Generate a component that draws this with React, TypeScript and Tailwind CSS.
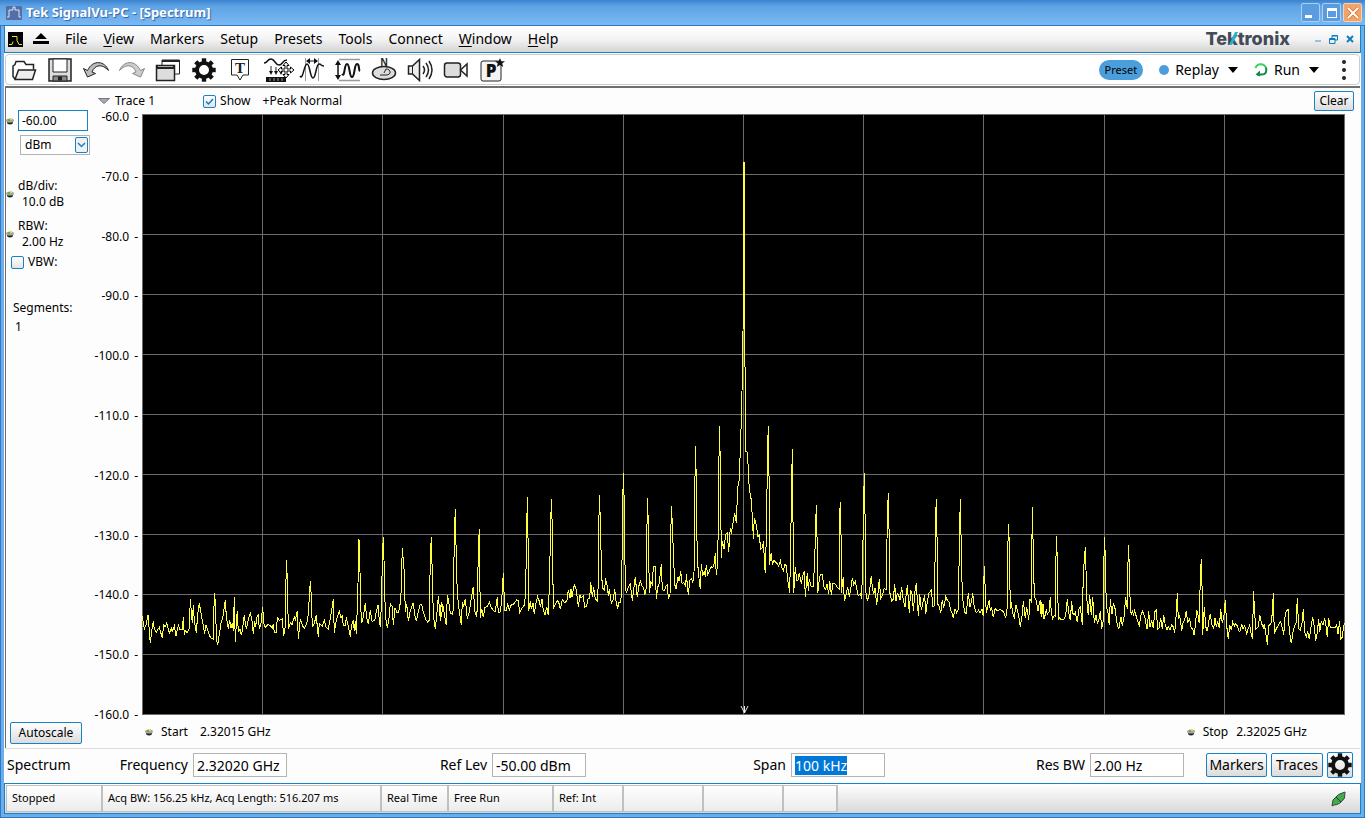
import { useEffect, useRef } from 'react';
import type { ReactNode } from 'react';
import clsx from 'clsx';

const menus = ['File', 'View', 'Markers', 'Setup', 'Presets', 'Tools', 'Connect', 'Window', 'Help'];
const underlined = ['View', 'Window', 'Help'];

const levels = ['-60.0', '-70.0', '-80.0', '-90.0', '-100.0', '-110.0', '-120.0', '-130.0', '-140.0', '-150.0', '-160.0'];

// Trace samples, kept in blocks. Each block has its own origin on the
// 1202 x 600 graticule and stores its points in thirds of a unit.
const blocks = [
  {
    x: -2,
    y: 366,
    points:
      '7,408 13,448 19,432 24,404 31,490 35,452 40,424 43,448 49,456 58,442 67,475 71,434 76,440 80,430 88,460 94,445 97,454 103,438 108,468 115,436 120,450 127,448 130,412 133,466 136,452 142,458 148,444 151,358 157,430 160,374 163,420 169,458 173,404 178,370 183,400 190,436 194,462 197,434 203,450 208,466 214,475 220,478 223,340 227,374 229,480 233,494 240,450 244,424 248,415 256,360 259,408 265,446 269,420 273,444 277,428 280,452 283,352 286,485 289,430 292,392 295,455 300,446 304,466 308,444 313,404 317,438 320,444 325,418 331,400 336,422 340,462 344,424 347,440 351,412 355,402 358,448 363,430 368,380 371,430 376,442 384,434 390,436 397,444 400,432 403,456 409,458 412,412 418,422 427,416 431,468 436,440 439,240 442,296 445,448 451,428 456,434 463,412 466,420 472,392 475,478 481,416 487,436 493,446 500,430 505,404 508,350 511,304 514,350 517,440 523,430 529,406 532,440 535,470 538,430 547,438 553,420 557,440 565,448 570,420 577,380 580,358 583,460 589,420 598,394 603,414 607,408 610,438 616,436 619,412 625,440 631,470 634,440 640,420 643,452 646,422 649,462 653,350 657,178 661,306 664,430 668,420 676,370 680,414 685,432 691,390 696,424 704,422 709,395 714,374 718,420 721,442 725,350 727,232 730,172 733,270 736,405 742,445 747,414 751,372 757,380 760,436 765,384 770,396 776,396 779,374 782,372 787,205 793,276 796,396 800,372 805,424 811,392 820,368 824,404 829,424 833,402 840,374 845,374 850,396 858,420 863,426 868,420 871,232 874,172 877,286 880,404 886,448 891,396 895,348 900,408 904,366 909,380',
  },
  {
    x: 298,
    y: 286,
    points:
      '1,662 4,606 10,622 19,676 22,584 26,606 31,640 37,642 40,630 43,404 46,328 49,478 52,582 57,626 64,676 67,606 71,618 76,598 82,656 88,636 93,600 100,560 104,634 109,646 112,630 115,446 118,386 121,654 125,626 130,652 135,622 142,620 148,606 153,620 160,632 166,634 172,590 175,638 181,636 185,600 190,520 194,632 199,632 203,610 208,630 213,616 221,612 230,600 235,602 239,638 246,624 254,614 257,560 262,290 265,462 266,632 271,604 274,628 279,608 283,642 288,610 293,590 298,604 301,620 306,598 310,630 315,644 320,620 325,646 328,560 331,430 334,298 337,382 340,624 347,612 352,602 356,606 361,628 367,598 375,610 381,600 385,570 390,594 393,566 396,590 403,554 409,570 415,620 420,586 424,594 430,588 434,622 440,618 445,594 449,596 452,546 457,590 461,562 466,596 472,604 475,550 476,408 478,286 481,356 484,488 487,564 493,570 497,540 500,546 505,588 508,566 511,588 514,610 520,598 524,566 528,602 533,626 537,606 541,608 545,580 547,390 550,220 553,310 556,570 560,576 565,560 571,552 577,602 581,570 586,532 592,592 596,560 601,542 606,558 611,562 614,586 619,564 622,294 625,368 628,580 632,546 637,554 640,500 646,500 649,598 653,562 658,550 664,492 667,568 673,572 678,558 682,554 685,594 690,586 692,430 694,318 697,370 700,452 704,554 709,568 713,530 718,544 722,512 726,550 732,548 737,558 739,522 745,586 749,540 755,536 758,550 762,520 764,330 766,138 769,236 772,498 775,504 778,548 781,568 784,492 788,528 793,512 796,530 799,494 803,524 808,514 813,500 818,504 823,490 826,460 829,526 833,490 836,270 838,78 841,182 844,474 847,424 852,446 857,404 862,398 866,456 871,384 874,402 880,364 884,338 889,370 893,262 898,238 901,150 905,28 909,-200 912,-714 915,-100 917,154',
  },
  {
    x: 598,
    y: 286,
    points:
      '19,155 22,157 25,208 28,268 34,300 38,370 40,416 43,354 49,374 54,410 58,406 62,448 67,444 71,424 73,490 76,518 80,368 82,176 85,78 88,290 88,496 94,458 97,494 102,480 107,488 112,490 116,498 121,482 126,504 130,512 134,494 139,496 143,540 149,578 152,430 155,240 157,148 159,366 161,580 166,502 170,542 174,540 178,518 184,552 188,528 193,514 196,590 202,518 205,572 208,536 213,558 220,560 224,480 227,372 229,316 232,450 233,580 237,546 241,522 247,524 253,566 257,568 261,552 266,582 269,542 274,584 279,550 286,552 292,562 298,568 298,374 301,306 304,444 304,578 310,532 313,604 318,586 323,560 328,592 333,560 337,534 341,554 346,544 350,566 355,588 361,582 365,596 368,472 371,304 373,220 376,390 378,580 382,600 386,594 390,560 394,528 397,562 401,582 405,564 410,616 414,580 418,538 422,596 427,586 432,566 439,568 442,354 445,280 448,428 449,576 455,604 460,598 464,552 468,602 472,580 476,586 480,600 485,562 490,600 495,620 498,588 502,556 508,638 512,570 517,584 520,634 525,574 529,550 535,648 539,582 544,630 550,602 554,586 557,642 562,606 567,580 574,570 579,622 584,614 586,376 589,298 592,458 593,612 597,618 602,640 607,600 611,624 617,590 622,600 627,606 632,630 636,638 640,654 645,626 650,638 655,628 659,376 661,298 664,446 667,588 670,610 674,636 678,642 682,612 685,578 690,620 694,606 698,580 703,622 709,638 716,630 720,640 726,628 730,648 731,560 733,498 736,576 739,640 744,614 748,600 751,634 755,624 760,652 765,626 772,632 780,628 787,632 793,640 797,654 802,620 803,480 805,372 808,428 811,628 814,606 818,640 823,652 828,616 832,630 836,648 841,680 847,642 850,604 856,654 860,620 866,660 870,598 874,604 877,322 880,454 883,590 888,600 894,632 899,602 904,652 907,612 912,658',
  },
  {
    x: 898,
    y: 386,
    points:
      '2,300 4,352 7,326 10,312 13,358 19,328 22,342 27,336 31,290 34,340 38,356 43,346 46,348 47,232 49,108 52,176 55,360 59,352 64,360 74,356 79,330 82,298 86,336 91,360 95,304 98,340 102,344 106,338 112,366 116,330 121,318 127,374 130,218 136,142 139,240 142,330 145,344 149,284 154,346 158,290 163,370 168,344 172,370 176,362 181,334 185,386 190,360 191,228 193,110 196,168 199,322 203,330 208,376 211,298 216,342 220,310 226,328 230,366 236,388 243,352 247,378 252,350 257,292 262,328 263,240 265,136 268,192 271,330 274,344 278,330 280,348 284,332 290,354 298,376 303,346 308,332 314,350 321,388 326,334 330,382 335,360 340,384 344,336 349,330 353,388 357,384 362,354 367,386 371,346 376,376 381,390 385,380 390,390 395,374 400,380 404,400 409,340 412,280 415,358 419,346 425,392 429,368 434,360 439,332 443,366 449,356 454,386 458,384 462,404 466,380 470,330 474,346 478,370 481,228 484,178 487,292 488,404 493,322 497,380 502,394 506,366 511,342 516,376 521,386 525,354 529,380 533,366 538,384 542,328 547,370 552,346 556,300 560,378 565,416 569,376 574,390 578,366 583,378 587,370 592,378 597,394 601,392 605,372 609,388 614,378 620,402 624,388 629,376 634,406 638,418 640,274 643,316 647,388 655,380 659,344 664,368 670,384 673,372 678,404 682,434 686,378 693,370 697,340 700,280 703,402 709,386 715,376 722,364 727,384 731,404 736,340 744,326 748,392 754,430 759,396 764,376 768,370 772,294 776,386 781,390 786,370 790,328 794,396 799,410 803,396 808,416 813,380 818,352 822,374 827,422 832,398 836,356 839,396 844,362 849,376 854,354 859,384 862,412 866,354 871,384 878,382 885,384 890,374 894,402 899,364 902,418 907,412 910,384 913,370',
  },
];

const trace = blocks
  .flatMap((block) =>
    block.points.split(' ').map((point) => {
      const [x, y] = point.split(',').map(Number);
      return `${(block.x + x / 3).toFixed(1)},${(block.y + y / 3).toFixed(1)}`;
    })
  )
  .join(' ');

function Glyph({ children }: { children: ReactNode }) {
  return (
    <svg viewBox="0 0 24 24" className="h-6 w-6 shrink-0 overflow-visible" fill="none" stroke="#222" strokeWidth={1.5}>
      {children}
    </svg>
  );
}

function GearIcon() {
  return (
    <Glyph>
      <circle cx="12" cy="12" r="7" stroke="#111" strokeWidth="4" />
      {[0, 45, 90, 135, 180, 225, 270, 315].map((angle) => (
        <rect key={angle} x="9.8" y="0.3" width="4.4" height="5" fill="#111" stroke="none" transform={`rotate(${angle} 12 12)`} />
      ))}
    </Glyph>
  );
}

const tools = [
  {
    name: 'Open',
    icon: (
      <Glyph>
        <path d="M3 21 1 18.5V8l2-1.5 1-3h8l2 3h7.5v5" />
        <path d="M3 21.5 6.5 12h17L20.5 21.5Z" fill="#eee" />
      </Glyph>
    ),
  },
  {
    name: 'Save',
    icon: (
      <Glyph>
        <path d="M1 1h22v22H1Z" fill="#ddd" />
        <path d="M5 1h14v13H5Z" fill="#fff" strokeWidth="1" />
        <path d="M5 18h14v5H5Z" fill="#888" strokeWidth="1" />
        <path d="M10 18.5h4v4h-4Z" fill="#222" stroke="none" />
      </Glyph>
    ),
  },
  {
    name: 'Undo',
    icon: (
      <Glyph>
        <path d="M-.5 10.500 3.500 19 11.500 15.500 8 14C11 6.500 18 5.500 24.500 12.500 21 3 9 1 3.500 12.500Z" fill="#bbb" strokeWidth="1" strokeLinejoin="round" />
      </Glyph>
    ),
  },
  {
    name: 'Redo',
    icon: (
      <Glyph>
        <path d="M24.500 10.500 20.500 19 12.500 15.500 16 14C13 6.500 6 5.500-.5 12.500 3 3 15 1 20.500 12.500Z" fill="#ccc" stroke="#888" strokeWidth="1" strokeLinejoin="round" />
      </Glyph>
    ),
  },
  {
    name: 'Windows',
    icon: (
      <Glyph>
        <path d="M6 7V2h17.500v14H19" fill="#fff" strokeWidth="1" />
        <path d="M6 3h17.500" strokeWidth="2" />
        <path d="M.5 7.500h18v15H.5Z" fill="#ddd" />
        <path d="M.5 9.500h18" strokeWidth="3" />
        <path d="M2 8.500h15" stroke="#aaa" strokeWidth="1" />
      </Glyph>
    ),
  },
  { name: 'Settings', icon: <GearIcon /> },
  {
    name: 'Trigger',
    icon: (
      <Glyph>
        <path d="M3.500 1.500h17V17H15l-3 5-3-5H3.500Z" strokeWidth="1" fill="#fff" />
        <text x="12" y="15" textAnchor="middle" fill="#222" stroke="none" className="font-['Liberation_Serif'] text-[15px] font-bold">
          T
        </text>
      </Glyph>
    ),
  },
  {
    name: 'Acquire',
    icon: (
      <Glyph>
        <path d="M0 5C4 5 3 1 7 1s4 6 8 6 3-5 8-5" stroke="#111" />
        <path d="M7 8v7m5-6v6m5-6v6" strokeWidth="1" />
        <path d="m5 13 2 4 2-4Zm5 0 2 4 2-4Zm5 0 2 4 2-4Z" fill="#111" stroke="none" />
        <path d="M2 19h20v5H2Z" fill="#111" stroke="none" />
        <path d="M6 20v3m4-3v3m4-3v3m4-3v3" stroke="#999" strokeWidth="1" />
      </Glyph>
    ),
  },
  {
    name: 'Analysis time',
    icon: (
      <Glyph>
        <path d="M5.500 0v23M18.500 0v23" stroke="#999" strokeWidth="1" />
        <path d="M7 3h10" stroke="#111" strokeWidth="1" />
        <path d="m10 0-4 3 4 3Zm4 0 4 3-4 3Z" fill="#111" stroke="none" />
        <path d="M0 18c3 5 4-12 7-12s3 14 6 14 3-14 6-14 1 2 5 2" stroke="#111" />
      </Glyph>
    ),
  },
  {
    name: 'Amplitude',
    icon: (
      <Glyph>
        <path d="M3 1.500h21M3 22.500h21" stroke="#999" />
        <path d="M2 4v16" stroke="#111" />
        <path d="m-1 7 3-5 3 5Zm0 10 3 5 3-5Z" fill="#111" stroke="none" />
        <path d="M6 16c3 4 2-10 5-10s2 13 5 13 2-13 5-13 1 6 3 7" stroke="#111" strokeWidth="2" />
      </Glyph>
    ),
  },
  {
    name: 'Compass',
    icon: (
      <Glyph>
        <ellipse cx="12" cy="15" rx="11.500" ry="6.500" fill="#ddd" />
        <path d="m12 15 2-4c5 0 6 6 0 6h-6" strokeWidth="1" />
        <text x="12" y="8" textAnchor="middle" fill="#222" stroke="none" className="font-['Liberation_Sans'] text-[10px] font-bold">
          N
        </text>
      </Glyph>
    ),
  },
  {
    name: 'Audio',
    icon: (
      <Glyph>
        <path d="M.5 8h4l7-6.500v21L4.500 16h-4Z" fill="#eee" />
        <path d="M4.500 8v8" strokeWidth="1" />
        <path d="M15 8q3 4 0 8M18 5q5 7 0 14M21 3q6 9 0 18" />
      </Glyph>
    ),
  },
  {
    name: 'Record',
    icon: (
      <Glyph>
        <rect x="0.500" y="5" width="16" height="14" rx="2.500" fill="#ddd" />
        <path d="M16.500 12 23 6v12Z" fill="#fff" />
      </Glyph>
    ),
  },
  {
    name: 'Presets',
    icon: (
      <Glyph>
        <rect x="1" y="3" width="20" height="20" rx="2" strokeWidth="1" fill="#f4f4f4" />
        <text x="11" y="19" textAnchor="middle" fill="#111" stroke="none" className="font-['Open_Sans'] text-[17px] font-extrabold">
          P
        </text>
        <path d="m20 0 1.300 3.200 3.700.1-2.800 2.300 1 3.400-3.200-1.900L16.800 9l1-3.400L15 3.300l3.700-.1Z" fill="#111" stroke="none" />
      </Glyph>
    ),
  },
];

function Knob() {
  return (
    <svg viewBox="0 0 8 8" className="h-2 w-2 shrink-0">
      <ellipse cx="4" cy="5" rx="3" ry="2.500" fill="#223" />
      <ellipse cx="4" cy="3.500" rx="4" ry="2" fill="#a8a8a0" />
      <rect x="2" y="2" width="2" height="2" fill="#5b3" />
      <rect x="4" y="1" width="2" height="2" fill="#dd5" />
    </svg>
  );
}

const boxButton =
  'flex items-center justify-center rounded-xs border border-[#1583c4] bg-gradient-to-b from-white to-[#dcdcdc]';

const checkbox =
  'h-[13px] w-[13px] shrink-0 appearance-none rounded-xs border border-[#1583c4] bg-gradient-to-b from-white to-[#e4e4e4]';

function TitleBar() {
  return (
    <header className="flex h-[25px] shrink-0 items-center bg-gradient-to-b from-[#3b83cf] via-[#5fa3e5] via-25% to-[#79b9f3] pr-[3px] pl-[6px]">
      <svg viewBox="0 0 16 14" className="h-[14px] w-4">
        <rect width="16" height="14" rx="1" fill="#536fa8" />
        <path d="M1 11h2V4h4V1h2v3h4v7h2" stroke="#dbe7fb" fill="none" />
      </svg>
      <h1 className="flex-1 pl-1 font-['Noto_Sans'] text-[13px] font-bold text-white [text-shadow:1px_1px_1px_#2c62a6]">
        Tek SignalVu-PC - [Spectrum]
      </h1>
      <div className="flex gap-[2px]">
        <button aria-label="Minimize" className="flex h-[19px] w-[19px] items-end justify-start rounded-xs border border-[#a9d0f5] bg-[#5b9be0] pb-[3px] pl-[3px]">
          <span className="h-[3px] w-[7px] bg-white" />
        </button>
        <button aria-label="Maximize" className="flex h-[19px] w-[19px] items-center justify-center rounded-xs border border-[#a9d0f5] bg-[#5b9be0]">
          <span className="h-[10px] w-[10px] border border-t-3 border-white" />
        </button>
        <button aria-label="Close" className="flex h-[19px] w-[19px] items-center justify-center rounded-xs border border-[#fbd0b0] bg-[#f3a268]">
          <svg viewBox="0 0 12 12" className="h-3 w-3">
            <path d="m1 1 10 10M11 1 1 11" stroke="#d9702c" strokeWidth="3.500" />
            <path d="m1 1 10 10M11 1 1 11" stroke="#fff" strokeWidth="2" />
          </svg>
        </button>
      </div>
    </header>
  );
}

function MenuBar() {
  return (
    <nav className="flex h-[28px] shrink-0 items-center border border-[#1583c4] bg-gradient-to-b from-white via-[#f4f4f4] to-[#d4d4d4] pr-[5px] pl-[3px] text-sm">
      <svg viewBox="0 0 15 15" className="h-[15px] w-[15px]">
        <rect width="15" height="15" />
        <path d="M1 12.500h3l1-3M4 4.500h5v4l2 4h3" stroke="#e6e632" fill="none" />
      </svg>
      <svg viewBox="0 0 16 12" className="ml-[10px] h-3 w-4">
        <path d="m8 0 6 6H2ZM0 8h16v3H0Z" />
      </svg>
      <div className="ml-4 flex flex-1 gap-4">
        {menus.map((menu) => (
          <button key={menu}>
            {underlined.includes(menu) ? (
              <>
                <u className="underline-offset-2">{menu[0]}</u>
                {menu.slice(1)}
              </>
            ) : (
              menu
            )}
          </button>
        ))}
      </div>
      <div className="mr-[25px] font-['Inter'] text-lg font-extrabold text-[#434b57]">
        Te
        <span className="relative">
          k
          <svg viewBox="0 0 10 13" className="absolute right-0 bottom-1 h-[13px] w-[10px]">
            <path d="M1 13 7 0h3L4 13Z" fill="#26b3cf" />
          </svg>
        </span>
        tronix
      </div>
      <div className="flex items-center gap-2">
        <button aria-label="Minimize document" className="flex h-[9px] w-[6px] items-end">
          <span className="mb-[2px] h-[2px] w-full bg-[#8fc3e2]" />
        </button>
        <button aria-label="Restore document">
          <svg viewBox="0 0 9 9" className="h-[9px] w-[9px]" fill="none" stroke="#0f7cc0">
            <path d="M3 3V.5h5.500V5H6M3 1h5.500M.5 3.500h5.500v5H.5ZM.5 4.500h5.500" />
          </svg>
        </button>
        <button aria-label="Close document">
          <svg viewBox="0 0 9 9" className="h-[9px] w-[9px]">
            <path d="m1 1 6 6M7 1 1 7" stroke="#0f7cc0" strokeWidth="2" />
          </svg>
        </button>
      </div>
    </nav>
  );
}

function Toolbar() {
  return (
    <div className="mx-px mt-px flex h-[31px] shrink-0 items-center rounded border border-[#ccc] bg-white text-sm">
      <div className="flex flex-1">
        {tools.map((tool) => (
          <button key={tool.name} aria-label={tool.name} className="relative flex w-9 justify-center">
            {tool.icon}
            {tool.name === 'Acquire' && (
              <svg viewBox="0 0 16 16" className="absolute top-1 left-5 h-4 w-4 overflow-visible">
                <path
                  d="m8 0 3 3.500H9V7h3.500V5L16 8l-3.500 3V9H9v3.500h2L8 16l-3-3.500h2V9H3.500v2L0 8l3.500-3v2H7V3.500H5Z"
                  fill="#fff"
                  stroke="#000"
                />
              </svg>
            )}
          </button>
        ))}
      </div>
      <button className="h-5 rounded-full bg-[#4a9edb] px-[6px] text-[11px] leading-5">Preset</button>
      <button className="ml-4 flex items-center">
        <span className="mr-[6px] h-[10px] w-[10px] rounded-full bg-[#4a9edb]" />
        Replay
        <svg viewBox="0 0 10 6" className="ml-[9px] h-[6px] w-[10px]">
          <path d="M0 0h10L5 6Z" />
        </svg>
      </button>
      <button className="ml-4 flex items-center">
        <svg viewBox="0 0 14 14" className="mr-[6px] h-[14px] w-[14px]" fill="none" strokeWidth="2">
          <path d="M1.500 5A5.500 5.500 0 0 1 12 5" stroke="#39d060" />
          <path d="M12 4.500C13 8 12 11.500 8 11.500H3" stroke="#158a4a" />
          <path d="M6 7.500v6L1.500 11.500Z" fill="#158a4a" stroke="none" />
        </svg>
        Run
        <svg viewBox="0 0 10 6" className="ml-[9px] h-[6px] w-[10px]">
          <path d="M0 0h10L5 6Z" />
        </svg>
      </button>
      <button aria-label="More" className="mr-[13px] ml-[23px] flex flex-col gap-1">
        <span className="h-1 w-1 rounded-full bg-[#222]" />
        <span className="h-1 w-1 rounded-full bg-[#222]" />
        <span className="h-1 w-1 rounded-full bg-[#222]" />
      </button>
    </div>
  );
}

function SidePanel() {
  return (
    <aside className="flex w-[84px] shrink-0 flex-col pt-[22px] pb-1">
      <div className="flex items-center gap-1">
        <Knob />
        <input aria-label="Reference level" defaultValue="-60.00" className="h-[21px] w-[70px] border border-[#1583c4] bg-white px-[3px] outline-none" />
      </div>
      <div className="relative mt-1 ml-[14px] h-5 w-[70px]">
        <select aria-label="Unit" className="h-5 w-full appearance-none border border-[#b4b4b4] bg-white px-1 leading-[18px]">
          <option>dBm</option>
          <option>dBmV</option>
        </select>
        <svg viewBox="0 0 13 16" className="pointer-events-none absolute top-[2px] right-[2px] h-4 w-[13px]" fill="none" stroke="#1583c4">
          <rect x="0.5" y="0.5" width="12" height="15" rx="1.500" fill="#f0f0f0" />
          <path d="m3 6 3.500 3.500L10 6" strokeWidth="1.500" />
        </svg>
      </div>
      <div className="mt-[23px] flex items-center gap-1 leading-4">
        <Knob />
        <div>
          <div>dB/div:</div>
          <div className="pl-1">10.0 dB</div>
        </div>
      </div>
      <div className="mt-2 flex items-center gap-1 leading-4">
        <Knob />
        <div>
          <div>RBW:</div>
          <div className="pl-1">2.00 Hz</div>
        </div>
      </div>
      <label className="mt-1 ml-[5px] flex items-center gap-1 leading-4">
        <input type="checkbox" className={checkbox} />
        VBW:
      </label>
      <div className="mt-[30px] ml-[7px] leading-4">Segments:</div>
      <div className="mt-[3px] ml-[9px] leading-4">1</div>
      <button className={clsx(boxButton, 'mt-auto ml-1 h-[22px] w-[72px]')}>Autoscale</button>
    </aside>
  );
}

function Graph() {
  return (
    <div className="flex min-h-0 flex-1 pr-[15px]">
      <div className="flex w-[52px] shrink-0 flex-col justify-between pt-[3px] pr-1">
        {levels.map((level) => (
          <div key={level} className="flex h-0 items-center justify-end gap-[5px]">
            <span>{level}</span>
            <span>-</span>
          </div>
        ))}
      </div>
      <div className="min-w-0 flex-1">
        <svg viewBox="0 0 1203 601" preserveAspectRatio="none" className="block h-full w-full bg-black" shapeRendering="crispEdges">
          {levels.map((level, i) => (
            <g key={level} stroke="#6c6c6c">
              <path d={`M0 ${i * 60 + 0.5}h1203`} />
              <path d={`M${Math.round(i * 120.2) + 0.5} 0v601`} />
            </g>
          ))}
          <polyline points={trace} fill="none" stroke="#ffff3c" />
          <path d="m599 592 3.500 7 3.500-7M602.500 592v7" fill="none" stroke="#eee" shapeRendering="auto" />
        </svg>
      </div>
    </div>
  );
}

function SpectrumView() {
  return (
    <main className="mx-px mt-px flex min-h-0 flex-1 border-t-2 border-l border-[#6f6f6f] bg-[#fdfdfd] text-xs">
      <SidePanel />
      <section className="flex min-w-0 flex-1 flex-col">
        <div className="flex h-[26px] shrink-0 items-center pr-[6px] pl-2">
          <svg viewBox="0 0 12 6" className="mr-[5px] h-[6px] w-3">
            <path d="M.5.5h11L6 5.500Z" fill="#aaa" stroke="#778" />
          </svg>
          Trace 1
          <label className="ml-12 flex items-center gap-1">
            <span className="relative flex">
              <input type="checkbox" defaultChecked className={checkbox} />
              <svg viewBox="0 0 13 13" className="pointer-events-none absolute inset-0" fill="none" stroke="#0f7cc0" strokeWidth="1.500">
                <path d="m3 6.500 2.500 2.500L10 4" />
              </svg>
            </span>
            Show
          </label>
          <span className="ml-3 flex-1">+Peak Normal</span>
          <button className={clsx(boxButton, 'h-5 w-10')}>Clear</button>
        </div>
        <Graph />
        <div className="flex h-[33px] shrink-0 items-center justify-between pr-[53px] pl-[55px]">
          <div className="flex items-center">
            <Knob />
            <span className="ml-2">Start</span>
            <span className="ml-3">2.32015 GHz</span>
          </div>
          <div className="flex items-center">
            <Knob />
            <span className="ml-2">Stop</span>
            <span className="ml-2">2.32025 GHz</span>
          </div>
        </div>
      </section>
    </main>
  );
}

function SettingsBar() {
  const span = useRef<HTMLInputElement>(null);

  useEffect(() => {
    span.current?.focus();
    span.current?.select();
  }, []);

  const field =
    'h-6 w-[94px] border border-[#b4b4b4] bg-white px-[3px] outline-none selection:bg-[#0078d7] selection:text-white';

  return (
    <div className="mx-px grid h-[35px] shrink-0 grid-cols-[282px_1fr_1fr_1fr_176px] items-center border-t border-[#dcdcdc] bg-[#fdfdfd] pb-[2px] text-sm">
      <div className="flex items-center justify-between pl-[2px]">
        <span>Spectrum</span>
        <label className="flex items-center gap-[5px]">
          Frequency
          <input defaultValue="2.32020 GHz" className={field} />
        </label>
      </div>
      <label className="flex items-center justify-end gap-[5px]">
        Ref Lev
        <input defaultValue="-50.00 dBm" className={field} />
      </label>
      <label className="flex items-center justify-end gap-[5px]">
        Span
        <input ref={span} defaultValue="100 kHz" className={field} />
      </label>
      <label className="flex items-center justify-end gap-[5px]">
        Res BW
        <input defaultValue="2.00 Hz" className={field} />
      </label>
      <div className="flex items-center justify-end gap-1 pr-[7px]">
        <button className={clsx(boxButton, 'h-6 w-[61px]')}>Markers</button>
        <button className={clsx(boxButton, 'h-6 w-[52px]')}>Traces</button>
        <button aria-label="Settings" className={clsx(boxButton, 'h-[26px] w-[26px]')}>
          <GearIcon />
        </button>
      </div>
    </div>
  );
}

function StatusBar() {
  const cell = 'flex h-full items-center border-r-2 border-[#c0c0c0] pl-[5px]';

  return (
    <footer className="flex h-[31px] shrink-0 items-center border border-[#1583c4] bg-gradient-to-b from-white to-[#d8d8d8] py-px pl-px text-[11px]">
      <div className="flex h-full flex-1">
        <div className="flex h-full border-y border-l border-[#c0c0c0] bg-gradient-to-b from-white to-[#ececec]">
          <div className={clsx(cell, 'w-[96px]')}>Stopped</div>
          <div className={clsx(cell, 'w-[279px]')}>Acq BW: 156.25 kHz, Acq Length: 516.207 ms</div>
          <div className={clsx(cell, 'w-[67px]')}>Real Time</div>
          <div className={clsx(cell, 'w-[105px]')}>Free Run</div>
          <div className={clsx(cell, 'w-[70px]')}>Ref: Int</div>
          <div className={clsx(cell, 'w-[80px]')} />
          <div className={clsx(cell, 'w-[80px]')} />
          <div className={clsx(cell, 'w-[54px]')} />
        </div>
      </div>
      <svg viewBox="0 0 16 16" className="mr-[13px] h-4 w-4">
        <path d="M1 15 2 9Q7 2 14 1L13.500 7Q9 14 3 14Z" fill="#3fae49" stroke="#444" />
        <path d="m5 6 5 5" stroke="#333" />
      </svg>
    </footer>
  );
}

export default function App() {
  return (
    <div className="flex h-screen flex-col bg-[#3b83cf] font-['Noto_Sans',sans-serif] text-black">
      <TitleBar />
      <div className="flex min-h-0 flex-1 flex-col border-x-4 border-b-4 border-[#6aaeee] outline-1 -outline-offset-1 outline-[#2f78c6]">
        <MenuBar />
        <div className="flex min-h-0 flex-1 flex-col bg-white">
          <Toolbar />
          <SpectrumView />
          <SettingsBar />
        </div>
        <StatusBar />
      </div>
    </div>
  );
}
